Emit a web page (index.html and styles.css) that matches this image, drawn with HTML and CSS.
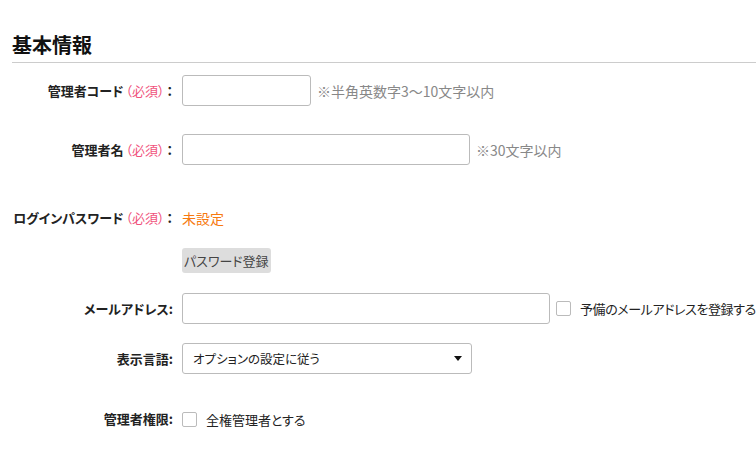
FILE: index.html
```html
<!DOCTYPE html>
<html lang="ja">
<head>
	<meta charset="utf-8" />
	<title>基本情報</title>
	<link rel="stylesheet" href="styles.css">
</head>
<body>
	<div class="page">
		<h2 class="sectionTitle">基本情報</h2>

		<div class="row rowCode">
			<label class="label" for="adminCode">管理者コード<span class="req">（必須）</span><span class="colon">：</span></label>
			<div class="field">
				<input id="adminCode" class="text short" type="text">
				<span class="hint">※半角英数字3～10文字以内</span>
			</div>
		</div>

		<div class="row rowName">
			<label class="label" for="adminName">管理者名<span class="req">（必須）</span><span class="colon">：</span></label>
			<div class="field">
				<input id="adminName" class="text medium" type="text">
				<span class="hint">※30文字以内</span>
			</div>
		</div>

		<div class="row rowPass">
			<span class="label">ログインパスワード<span class="req">（必須）</span><span class="colon">：</span></span>
			<div class="field">
				<span class="unset">未設定</span>
			</div>
		</div>

		<div class="row rowButton">
			<span class="label"></span>
			<div class="field">
				<button class="btn" type="button">パスワード登録</button>
			</div>
		</div>

		<div class="row rowMail">
			<label class="label" for="mail">メールアドレス:</label>
			<div class="field">
				<input id="mail" class="text long" type="text">
				<label class="check"><input type="checkbox"><span class="tight">予備のメールアドレスを登録する</span></label>
			</div>
		</div>

		<div class="row rowLang">
			<label class="label" for="lang">表示言語:</label>
			<div class="field">
				<span class="selectWrap">
					<select id="lang" class="select">
						<option>オプションの設定に従う</option>
						<option>日本語</option>
						<option>English</option>
					</select>
				</span>
			</div>
		</div>

		<div class="row rowRole">
			<span class="label">管理者権限:</span>
			<div class="field">
				<label class="check"><input type="checkbox"><span>全権管理者とする</span></label>
			</div>
		</div>
	</div>
</body>
</html>
```

FILE: styles.css
```css
html {
	font-family: "Noto Sans CJK JP", "Noto Sans", sans-serif;
	font-size: 13px;
	font-feature-settings: "palt";
	color: #222;
	background-color: #fff;
	overflow: hidden;
}

body {
	margin: 0;
	padding: 0;
}

.page {
	padding: 31px 0 0 12px;
}

.sectionTitle {
	margin: 0;
	font-size: 20px;
	line-height: 27px;
	font-weight: bold;
	color: #111;
	padding-bottom: 4px;
	border-bottom: 1px solid #ccc;
}

/* one form row: label column + field column */
.row {
	display: flex;
	align-items: center;
	column-gap: 9px;
}

.label {
	flex: 0 0 161px;
	text-align: right;
	font-weight: bold;
	white-space: nowrap;
	line-height: 20px;
}

.req {
	color: #f0527c;
	font-weight: normal;
	margin-left: 2px;
}

.colon {
	margin-left: 2px;
}

.field {
	display: flex;
	align-items: center;
	column-gap: 6px;
	white-space: nowrap;
}

.rowCode { margin-top: 12px; }
.rowName { margin-top: 28px; }
.rowPass { margin-top: 43px; }
.rowButton { margin-top: 20px; }
.rowMail { margin-top: 20px; }
.rowLang { margin-top: 19px; }
.rowRole { margin-top: 35px; }

.text {
	flex: none;
	height: 31px;
	box-sizing: border-box;
	border: 1px solid #bbb;
	border-radius: 3px;
	padding: 0 8px;
	font: inherit;
	margin: 0;
}

.short { width: 129px; }
.medium { width: 288px; }
.long { width: 368px; }

.hint {
	color: #888;
	font-size: 14px;
	font-feature-settings: normal;
}

.unset {
	color: #f77a10;
	font-size: 14px;
	line-height: 20px;
}

.btn {
	font: inherit;
	color: #444;
	background-color: #ddd;
	border: 0;
	border-radius: 3px;
	height: 25px;
	padding: 0 2px;
	margin: 0;
}

.check {
	display: flex;
	align-items: center;
	column-gap: 9px;
}

.check input {
	flex: none;
	appearance: none;
	-webkit-appearance: none;
	width: 15px;
	height: 15px;
	margin: 0;
	border: 1px solid #bbb;
	border-radius: 2px;
	background-color: #fff;
}

.tight {
	letter-spacing: -0.4px;
}

.selectWrap {
	position: relative;
	display: inline-block;
}

.selectWrap:after {
	content: "";
	position: absolute;
	right: 10px;
	top: 13px;
	border-left: 4px solid transparent;
	border-right: 4px solid transparent;
	border-top: 5px solid #111;
	pointer-events: none;
}

.select {
	appearance: none;
	-webkit-appearance: none;
	width: 290px;
	height: 31px;
	box-sizing: border-box;
	border: 1px solid #bbb;
	border-radius: 3px;
	background-color: #fff;
	padding: 0 10px;
	font: inherit;
	font-size: 12.5px;
	font-feature-settings: "palt";
	color: #222;
	margin: 0;
}
```
